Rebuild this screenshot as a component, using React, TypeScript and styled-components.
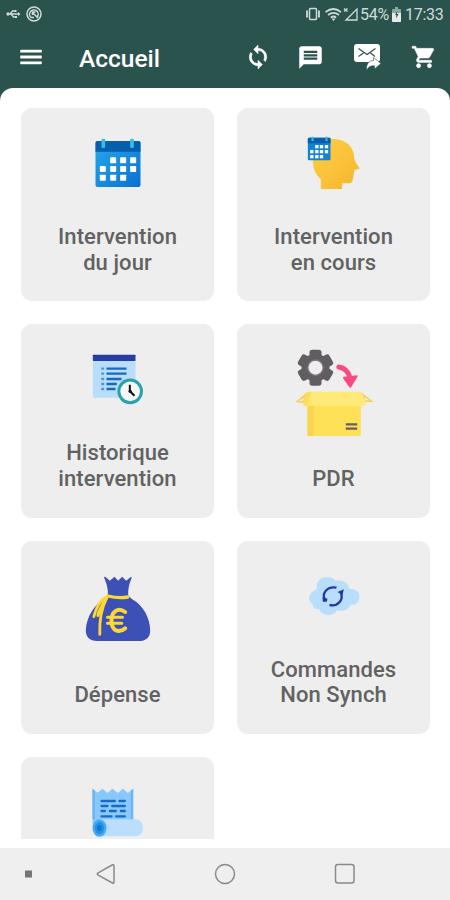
import React from "react";
import styled, { createGlobalStyle, css } from "styled-components";
import { MdLoop, MdMenu, MdMessage, MdShoppingCart } from "react-icons/md";

const GlobalStyle = createGlobalStyle`
  * { box-sizing: border-box; }
  body { margin: 0; background: #2a534d; font-family: Roboto, "Liberation Sans", sans-serif; }
`;

const Screen = styled.div`
  width: 450px;
  height: 900px;
  display: flex;
  flex-direction: column;
  overflow: hidden;
  background: #2a534d;
`;

const StatusBar = styled.div`
  height: 28px;
  flex: none;
  display: flex;
  align-items: center;
  justify-content: space-between;
  padding: 0 5px 0 6px;
  color: #d0dbd8;
  font-size: 16px;
`;

const StatusGroup = styled.div<{ $gap?: number }>`
  display: flex;
  align-items: center;
  gap: ${(p) => p.$gap ?? 0}px;
`;

const StatusText = styled.span<{ $width: number }>`
  width: ${(p) => p.$width}px;
  white-space: nowrap;
  letter-spacing: -0.3px;
  line-height: 28px;
  padding-top: 1px;
`;

const AppBar = styled.header`
  height: 60px;
  flex: none;
  display: flex;
  align-items: center;
  padding: 0 13px 2px 17px;
  color: #fff;
`;

const IconButton = styled.button<{ $gap?: number; $bold?: number }>`
  display: flex;
  padding: 0;
  margin: 0 0 0 ${(p) => p.$gap ?? 0}px;
  border: 0;
  background: none;
  color: inherit;

  ${(p) =>
    p.$bold !== undefined &&
    css`
      > svg {
        stroke-width: ${p.$bold};
      }
      path[fill="none"] {
        stroke: none;
      }
    `}
`;

const Title = styled.h1`
  flex: 1;
  margin: 3px 0 0 34px;
  font-size: 24.5px;
  font-weight: 500;
  line-height: 30px;
`;

const Panel = styled.main`
  flex: 1;
  min-height: 0;
  padding: 20px 19px 9px 21px;
  background: #fff;
  border-radius: 13px 13px 0 0;
`;

const Grid = styled.div`
  height: 100%;
  overflow: hidden;
  display: grid;
  grid-template-columns: 193px 193px;
  grid-auto-rows: 193.3px;
  gap: 23px 23px;
`;

const Card = styled.div`
  display: flex;
  flex-direction: column;
  align-items: center;
  padding: 15.5px 0 26px;
  border-radius: 11px;
  background: #eee;
`;

const Art = styled.svg`
  width: 100px;
  height: 100px;
  flex: none;
`;

const Label = styled.div`
  margin-top: auto;
  color: #626262;
  font-size: 22px;
  font-weight: 500;
  line-height: 25.6px;
  letter-spacing: 0.08px;
  text-align: center;
  white-space: pre-line;
`;

const NavBar = styled.nav`
  height: 52px;
  flex: none;
  display: grid;
  grid-template-columns: 46px 120px 118px 121px;
  align-items: center;
  background: #efefef;
`;

const NavItem = styled.div<{ $start: number }>`
  display: flex;
  padding-left: ${(p) => p.$start}px;
`;

const CalendarArt = () => (
  <Art viewBox="-37.5 -3 300 300">
    <defs>
      <linearGradient id="calBody" x1="0" y1="0" x2="1" y2="1">
        <stop offset="0" stopColor="#27a9ec" />
        <stop offset="1" stopColor="#0a70d2" />
      </linearGradient>
    </defs>
    <rect x="45" y="48" width="135" height="138" rx="6" fill="url(#calBody)" />
    <path d="M45 80V54q0-6 6-6h123q6 0 6 6v26z" fill="#075fac" />
    <rect x="63" y="41" width="11" height="28" rx="4" fill="#35bdec" />
    <rect x="149" y="41" width="11" height="28" rx="4" fill="#35bdec" />
    <g fill="#fff">
      {[[89, 97], [119, 97], [149, 97], [58, 123], [89, 123], [119, 123], [149, 123], [58, 149], [89, 149], [119, 149]].map(
        ([x, y]) => <rect key={`${x}-${y}`} x={x} y={y} width="18" height="18" rx="2" />
      )}
    </g>
  </Art>
);

const HeadArt = () => (
  <Art viewBox="-19.5 -3 300 300">
    <defs>
      <linearGradient id="head" x1="0" y1="0" x2="1" y2="1">
        <stop offset="0" stopColor="#ffd044" />
        <stop offset="1" stopColor="#f5b52f" />
      </linearGradient>
    </defs>
    <path
      d="M91 192V163C76 150 67 130 67 106C67 67 96 42 130 42C166 42 191 67 191 97C191 108 201 120 207 129Q206 134 192 134L187 164Q185 174 176 175H155V189Q155 192 151 192Z"
      fill="url(#head)"
    />
    <rect x="52" y="38" width="68" height="68" rx="4" fill="#0f83da" />
    <path d="M52 55V42q0-4 4-4h60q4 0 4 4v13z" fill="#075fac" />
    <path d="M66 35v13M108 35v13" stroke="#35bdec" strokeWidth="6" />
    <g fill="#fff">
      {[[74, 60], [88, 60], [103, 60], [59, 75], [74, 75], [88, 75], [103, 75], [59, 90], [74, 90], [88, 90]].map(
        ([x, y]) => <rect key={`${x}-${y}`} x={x} y={y} width="10" height="10" />
      )}
    </g>
  </Art>
);

const HistoryArt = () => (
  <Art viewBox="-37.5 1 300 300">
    <path d="M37 60H165V174H37z" fill="#badefa" />
    <rect x="37" y="45" width="128" height="19" rx="2" fill="#253da5" />
    <g stroke="#1769bc" strokeWidth="7">
      <path d="M78 87h60M78 102h60M78 118h45M78 133h31M78 148h27" />
      <path d="M62 87h9M62 102h9M62 118h9M62 133h9M62 148h9" stroke="#5298d6" />
    </g>
    <circle cx="149" cy="155" r="34" fill="#f7f7f7" stroke="#2aa1ac" strokeWidth="9" />
    <path d="M148 135V155L162 168" fill="none" stroke="#111" strokeWidth="6" />
    <circle cx="149" cy="155" r="5" fill="#111" />
  </Art>
);

const PartsArt = () => (
  <Art viewBox="-4.5 1 300 300">
    <g fill="#625d62">
      {[0, 60, 120].map((a) => (
        <rect key={a} x="72" y="30" width="36" height="108" rx="8" transform={`rotate(${a} 90 84)`} />
      ))}
      <circle cx="90" cy="84" r="42" />
    </g>
    <circle cx="90" cy="84" r="23" fill="#eee" stroke="#7b757b" strokeWidth="4" />
    <path d="M160 82Q186 86 193 113" fill="none" stroke="#f84a83" strokeWidth="15" strokeLinecap="round" />
    <path d="M174 111L215 107Q218 108 216 111L197 143Q194 146 191 142L172 115Z" fill="#f84a83" />
    <path d="M66 157L29 188L52 190L80 164zM226 157L265 188L240 186z" fill="#f8cf57" />
    <path d="M58 174L37 185L52 184zM238 173L252 183L240 181z" fill="#eee" />
    <rect x="66" y="186" width="160" height="103" rx="3" fill="#ffe157" />
    <path d="M66 190h18v99h-14q-4 0-4-4z" fill="#fbd34d" />
    <path d="M67 156H227L241 191Q242 198 235 198H57Q52 198 54 190Z" fill="#ffe979" />
    <path d="M67 156H78L65 198H57Q52 198 54 190Z" fill="#ffdd59" />
    <path d="M181 254h34M181 267h34" stroke="#66615a" strokeWidth="7" />
  </Art>
);

const MoneyArt = () => (
  <Art viewBox="-22.5 -25 300 300">
    <path
      d="M97 92Q99 70 86 40Q85 36 90 38L103 49L117 37L128 49L140 37L152 49L166 38Q170 37 168 42Q157 68 158 92Q163 99 169 104C206 124 224 165 224 199C224 219 211 230 190 230H65C42 230 30 216 31 196C33 157 57 119 91 100Z"
      fill="#3c50b6"
    />
    <g fill="none" stroke="#ffd735" strokeWidth="10" strokeLinecap="round" strokeLinejoin="round">
      <path d="M97 95Q130 103 157 98" />
      <path d="M96 97C71 108 62 132 55 157M95 98C80 123 69 137 67 154M95 98C78 130 71 166 73 210" strokeWidth="8.5" />
      <path d="M149 143C127 127 107 143 108 170C109 201 130 207 149 192" strokeWidth="12" />
      <path d="M96 159h45M96 177h43" strokeWidth="9" />
    </g>
  </Art>
);

const CloudArt = () => (
  <Art viewBox="-34.5 -25 300 300">
    <path
      d="M64 65C65 48 78 38 96 39Q112 39 119 49C140 46 158 53 161 73C181 72 192 83 192 98C191 113 181 123 165 122C159 136 143 143 124 139C112 157 82 157 70 135C54 135 50 126 52 120C37 111 37 89 55 79Q66 79 64 65Z"
      fill="#b9defb"
    />
    <path
      d="M89 108C77 88 94 65 123 70M102 122C127 128 145 107 136 84"
      fill="none"
      stroke="#2638a0"
      strokeWidth="7"
    />
    <path d="M126 83L145 75L141 92ZM81 99L96 103L94 112L82 112Z" fill="#2638a0" />
  </Art>
);

const ReceiptArt = () => (
  <Art viewBox="-22.5 68 300 300">
    <path
      d="M51 118L66 130L81 118L96 131L111 118L127 131L142 118L157 131L173 118V225H51Z"
      fill="#8ac8fb"
    />
    <path d="M51 118l7 6v86h-7zM173 118l-7 6v90h7z" fill="#69b4f3" />
    <path
      d="M78 155h40M132 155h16M78 170h18M110 170h38M78 185h10M103 185h18M136 185h12M78 201h30M122 201h26"
      stroke="#176bc1"
      strokeWidth="7"
      strokeLinecap="round"
    />
    <path d="M73 210H180C210 210 210 261 180 261H73z" fill="#badefb" />
    <ellipse cx="72" cy="236" rx="21" ry="26" fill="#48a9f5" />
    <ellipse cx="72" cy="236" rx="14" ry="18" fill="#248fe5" />
    <ellipse cx="72" cy="236" rx="7" ry="9" fill="#1476cb" />
  </Art>
);

const cards = [
  { label: "Intervention\ndu jour", Picture: CalendarArt },
  { label: "Intervention\nen cours", Picture: HeadArt },
  { label: "Historique\nintervention", Picture: HistoryArt },
  { label: "PDR", Picture: PartsArt },
  { label: "Dépense", Picture: MoneyArt },
  { label: "Commandes\nNon Synch", Picture: CloudArt },
  { label: "", Picture: ReceiptArt },
];

const UsbIcon = () => (
  <svg width="15" height="14" viewBox="0 0 15 14" fill="none" stroke="currentColor" strokeWidth="1.3">
    <path d="M1 7h12M4 7l2.5-3H9M5 7l2.5 3H10" />
    <circle cx="2" cy="7" r="1" fill="currentColor" />
    <path d="M12 5l2.5 2L12 9zM8.5 3h2v2h-2zM9 9h2v2H9z" fill="currentColor" stroke="none" />
  </svg>
);

const AssistIcon = () => (
  <svg width="18" height="18" viewBox="0 0 18 18" fill="none" stroke="currentColor">
    <circle cx="8" cy="9" r="7" strokeWidth="1.5" />
    <path d="M5 12.5A4.3 4.3 0 1 1 11.5 11.5M5 12.5H8M6 7L12 13M6.500 10V7h3" strokeWidth="1.5" />
  </svg>
);

const SignalIcons = () => (
  <svg width="55" height="18" viewBox="0 0 55 18" fill="none" stroke="currentColor" strokeWidth="1.5">
    <rect x="4.5" y="3.5" width="7" height="11" rx="1" />
    <path d="M2 5.5v7M14 5.5v7" strokeWidth="1.8" />
    <path d="M20.5 7.2Q28.5 .8 36 7.2M23 10Q28.5 5.6 34 10M25.8 12.7Q28.5 10.3 31.2 12.7" strokeWidth="1.7" />
    <path d="M28.5 16l-2-2.5h4z" fill="currentColor" stroke="none" />
    <path d="M41 15L52 4V15z" strokeWidth="1.3" />
    <path d="M39 3.5l3.5 3m0-3l-3.5 3" />
  </svg>
);

const BatteryIcon = () => (
  <svg width="9" height="15" viewBox="0 0 9 15">
    <path d="M3 0h3v2h2q1 0 1 1v11q0 1-1 1H1q-1 0-1-1V3q0-1 1-1h2z" fill="#8ea7a1" />
    <path d="M0 6h9v8q0 1-1 1H1q-1 0-1-1z" fill="#e4ebe9" />
    <path d="M5.3 4L3 8H4.3v3.500L6.5 7H5z" fill="#2a534d" />
  </svg>
);

const MailForwardIcon = () => (
  <svg width="28" height="28" viewBox="0 0 28 28">
    <rect x="1" y="1" width="26" height="18" rx="3" fill="#fff" />
    <path d="M5.5 5.5l8.5 6L22.5 5.5M5.5 13.5l5-3.5M22 13.5L17.5 10" fill="none" stroke="#2a534d" strokeWidth="1.2" />
    <path
      d="M13.5 27.5C13 21 16 17.5 20.5 17.5V14.5L28 20.5L21.5 26V22.8C18 22.5 15.5 23.5 13.5 27.5Z"
      fill="#fff"
      stroke="#2a534d"
      strokeWidth="0.6"
    />
  </svg>
);

export default function App() {
  return (
    <Screen>
      <GlobalStyle />
      <StatusBar>
        <StatusGroup $gap={5}>
          <UsbIcon />
          <AssistIcon />
        </StatusGroup>
        <StatusGroup>
          <SignalIcons />
          <StatusText $width={32}>54%</StatusText>
          <StatusGroup $gap={4}>
            <BatteryIcon />
            <StatusText $width={40}>17:33</StatusText>
          </StatusGroup>
        </StatusGroup>
      </StatusBar>
      <AppBar>
        <IconButton aria-label="Menu" $bold={0.4}><MdMenu size={28} /></IconButton>
        <Title>Accueil</Title>
        <IconButton aria-label="Synchroniser" $bold={0.5}><MdLoop size={26} /></IconButton>
        <IconButton aria-label="Messages" $gap={26}><MdMessage size={27} /></IconButton>
        <IconButton aria-label="Envoyer" $gap={29}><MailForwardIcon /></IconButton>
        <IconButton aria-label="Panier" $gap={30} $bold={0.4}><MdShoppingCart size={26} /></IconButton>
      </AppBar>
      <Panel>
        <Grid>
          {cards.map(({ label, Picture }, i) => (
            <Card key={i}>
              <Picture />
              <Label>{label}</Label>
            </Card>
          ))}
        </Grid>
      </Panel>
      <NavBar>
        <NavItem $start={25}>
          <svg width="8" height="8"><rect width="7" height="7" y="0.5" fill="#757575" /></svg>
        </NavItem>
        <NavItem $start={50}>
          <svg width="20" height="22" viewBox="0 0 20 22" fill="none" stroke="#8a8a8a" strokeWidth="1.5">
            <path d="M1.8 10.2L16.5 1.8Q18 1.2 18 3V19Q18 20.8 16.5 20L1.8 11.8Q.7 11 1.8 10.2Z" />
          </svg>
        </NavItem>
        <NavItem $start={48}>
          <svg width="22" height="22" fill="none" stroke="#8a8a8a" strokeWidth="1.5">
            <circle cx="11" cy="11" r="9.5" />
          </svg>
        </NavItem>
        <NavItem $start={50}>
          <svg width="22" height="22" fill="none" stroke="#8a8a8a" strokeWidth="1.5">
            <rect x="1.5" y="1.5" width="18.5" height="18.5" rx="2.5" />
          </svg>
        </NavItem>
      </NavBar>
    </Screen>
  );
}
